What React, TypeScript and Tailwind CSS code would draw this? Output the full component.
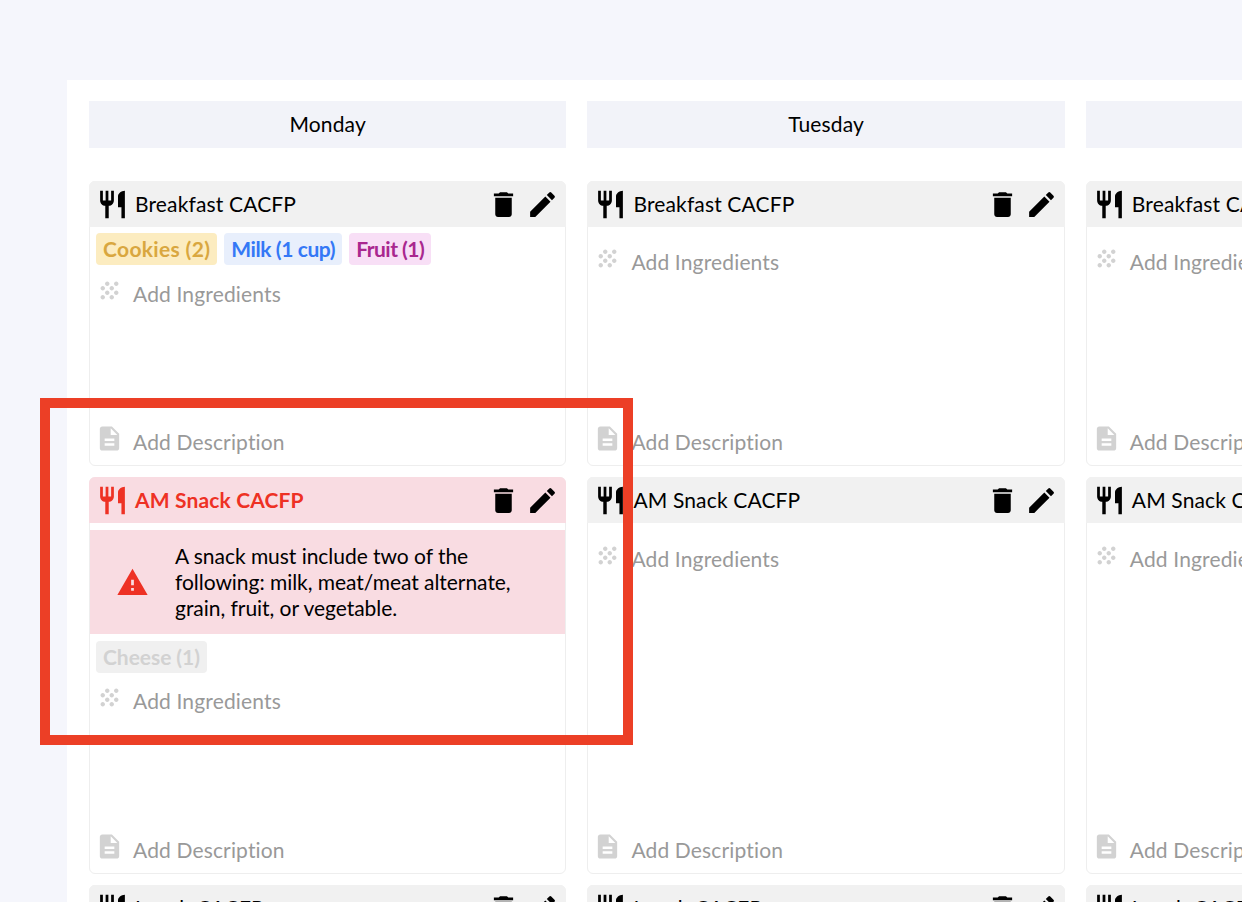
import { MdDelete, MdDescription, MdEdit, MdGrain, MdRestaurant, MdWarning } from "react-icons/md";

interface Tag {
  label: string;
  className: string;
}

interface MealCardProps {
  title: string;
  height: string;
  tags?: Tag[];
  error?: string;
  emptyGap?: string;
}

const cookies = { label: "Cookies (2)", className: "bg-[#fcecc0] text-[#d9a73f] tracking-[0.33px]" };
const milk = { label: "Milk (1 cup)", className: "bg-[#e8effc] text-[#3478f6] tracking-[-0.4px]" };
const fruit = { label: "Fruit (1)", className: "bg-[#f8dff6] text-[#a9278f] tracking-[-0.5px]" };
const cheese = { label: "Cheese (1)", className: "bg-[#f0f0f0] text-[#d2d2d2] tracking-[-0.05px]" };

function MealCard({ title, height, tags, error, emptyGap = "mt-[19px]" }: MealCardProps) {
  return (
    <div className={`flex shrink-0 flex-col rounded-md border border-[#eeeeee] ${height}`}>
      <div
        className={`-mx-px -mt-px flex h-[46px] shrink-0 items-center rounded-t-md pl-[7px] pr-[7px] ${
          error ? "bg-[#f9dce2] text-[#ee3124] font-bold" : "bg-[#f1f1f1] text-black"
        }`}
      >
        <MdRestaurant size={33} className="shrink-0" />
        <span className="ml-[6px] flex-1">{title}</span>
        <MdDelete size={33} className="shrink-0 text-black" />
        <MdEdit size={33} className="ml-[6px] shrink-0 text-black" />
      </div>
      {error && (
        <div className="mt-[7px] flex h-[104px] shrink-0 items-center bg-[#f9dce2] pl-[26px] pr-[40px] leading-[26px] tracking-[-0.04px] text-black">
          <MdWarning size={33} className="shrink-0 text-[#ee3124]" />
          <p className="ml-[26px]">{error}</p>
        </div>
      )}
      {tags && (
        <div className={`flex gap-[7px] pl-[6px] ${error ? "mt-[7px]" : "mt-[6px]"}`}>
          {tags.map((t) => (
            <span
              key={t.label}
              className={`flex h-[32px] items-center rounded px-[7px] font-bold ${t.className}`}
            >
              {t.label}
            </span>
          ))}
        </div>
      )}
      <div className={`flex items-center text-[#999999] ${tags ? (error ? "mt-[12px]" : "mt-[13px]") : emptyGap}`}>
        <MdGrain size={27} className="ml-[6px] -mt-[7px] shrink-0 text-[#d2d2d2]" />
        <span className="ml-[10px]">Add Ingredients</span>
      </div>
      <div className="mt-auto mb-[8px] flex items-center text-[#999999]">
        <MdDescription size={29} className="ml-[5px] -mt-[6px] shrink-0 text-[#d2d2d2]" />
        <span className="ml-[9px]">Add Description</span>
      </div>
    </div>
  );
}

function DayColumn({ day, monday }: { day: string; monday?: boolean }) {
  return (
    <div className="flex w-[477.4px] shrink-0 flex-col">
      <div className="flex h-[47px] shrink-0 items-center justify-center bg-[#f2f3f9] pb-[1px] text-black">{day}</div>
      <div className="mt-[33px] flex flex-col gap-[11px]">
        <MealCard title="Breakfast CACFP" height="h-[285px]" tags={monday ? [cookies, milk, fruit] : undefined} />
        <MealCard
          title="AM Snack CACFP"
          height="h-[397px]"
          tags={monday ? [cheese] : undefined}
          error={monday ? "A snack must include two of the following: milk, meat/meat alternate, grain, fruit, or vegetable." : undefined}
          emptyGap="mt-[20px]"
        />
        <MealCard title="Lunch CACFP" height="h-[285px]" />
      </div>
    </div>
  );
}

export default function App() {
  return (
    <div className="relative h-[902px] w-[1242px] overflow-hidden bg-[#f5f6fc] pl-[67px] pt-[80px] font-['Lato',sans-serif] text-[21px] tracking-[0.15px]">
      <div className="flex h-[900px] w-[1400px] gap-[21px] bg-white pl-[22px] pt-[21px]">
        <DayColumn day="Monday" monday />
        <DayColumn day="Tuesday" />
        <DayColumn day="Wednesday" />
      </div>
      {/* annotation box */}
      <div className="absolute left-[40px] top-[398px] h-[347px] w-[593px] border-[10px] border-[#ec3f26]" />
    </div>
  );
}
